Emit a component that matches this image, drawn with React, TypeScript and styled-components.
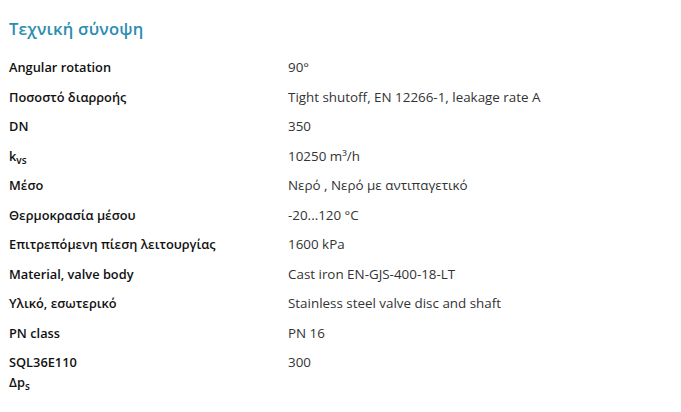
import React from 'react';
import styled, {createGlobalStyle} from "styled-components";

const GlobalStyle = createGlobalStyle`
    body {
        margin: 0;
        background: #fff;
        font-family: "Open Sans", "Noto Sans", sans-serif;
    }
`;

const Wrapper = styled.div`
    padding: 16px 0 0 9px;
    width: 672px;
`;

const Title = styled.h2`
    margin: 0 0 11px 0;
    font-size: 16.6px;
    line-height: 26px;
    font-weight: 600;
    color: #2b8db1;
    letter-spacing: 0.2px;
`;

const Table = styled.div`
    display: grid;
    grid-template-columns: 279px 1fr;
`;

const Label = styled.div`
    padding: 5px 0;
    font-size: 12.8px;
    line-height: 19.5px;
    font-weight: 600;
    color: #111;
`;

const Value = styled.div`
    padding: 5px 0;
    font-size: 13.4px;
    line-height: 19.5px;
    color: #333;
`;

const Sub = styled.sub`
    font-size: 10px;
    vertical-align: -3px;
    line-height: 0;
`;

type Row = { label: React.ReactNode; value: React.ReactNode };

const rows: Row[] = [
    {label: 'Angular rotation', value: '90°'},
    {label: 'Ποσοστό διαρροής', value: 'Tight shutoff, EN 12266-1, leakage rate A'},
    {label: 'DN', value: '350'},
    {label: <>k<Sub>vs</Sub></>, value: '10250 m³/h'},
    {label: 'Μέσο', value: 'Νερό , Νερό με αντιπαγετικό'},
    {label: 'Θερμοκρασία μέσου', value: '-20...120 °C'},
    {label: 'Επιτρεπόμενη πίεση λειτουργίας', value: '1600 kPa'},
    {label: 'Material, valve body', value: 'Cast iron EN-GJS-400-18-LT'},
    {label: 'Υλικό, εσωτερικό', value: 'Stainless steel valve disc and shaft'},
    {label: 'PN class', value: 'PN 16'},
    {label: <>SQL36E110<br/>Δp<Sub>s</Sub></>, value: '300'},
];

function App() {
    return (
        <Wrapper>
            <GlobalStyle/>
            <Title>Τεχνική σύνοψη</Title>
            <Table>
                {rows.map((r, i) => (
                    <React.Fragment key={i}>
                        <Label>{r.label}</Label>
                        <Value>{r.value}</Value>
                    </React.Fragment>
                ))}
            </Table>
        </Wrapper>
    );
}

export default App;
